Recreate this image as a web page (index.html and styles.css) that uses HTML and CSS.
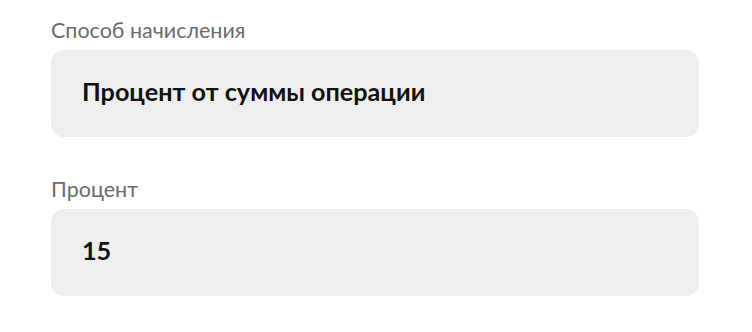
FILE: index.html
```html
<!DOCTYPE html>
<html lang="ru">
<head>
    <meta charset="UTF-8">
    <title>Начисление</title>
    <link rel="stylesheet" href="styles.css">
</head>
<body>
    <div class="form">
        <div class="field">
            <div class="field-label">Способ начисления</div>
            <div class="field-value">Процент от суммы операции</div>
        </div>
        <div class="field">
            <div class="field-label">Процент</div>
            <div class="field-value">15</div>
        </div>
    </div>
</body>
</html>
```

FILE: styles.css
```css
:root {
    --label-color: #6b6b6b;
    --text-color: #111111;
    --field-background: #eeeeee;
}
body {
    margin: 0;
    font-family: Lato, 'Noto Sans', sans-serif;
    background-color: #fff;
    color: var(--text-color);
}
.form {
    display: flex;
    flex-direction: column;
    gap: 40px;
    padding: 18px 53px 0 51px;
}
.field {
    display: flex;
    flex-direction: column;
    gap: 8px;
}
.field-label {
    font-size: 21.5px;
    line-height: 24px;
    color: var(--label-color);
}
.field-value {
    height: 30px;
    padding: 26px 31px 31px;
    background-color: var(--field-background);
    border-radius: 13px;
    font-size: 25.2px;
    line-height: 30px;
    font-weight: 700;
}
```
